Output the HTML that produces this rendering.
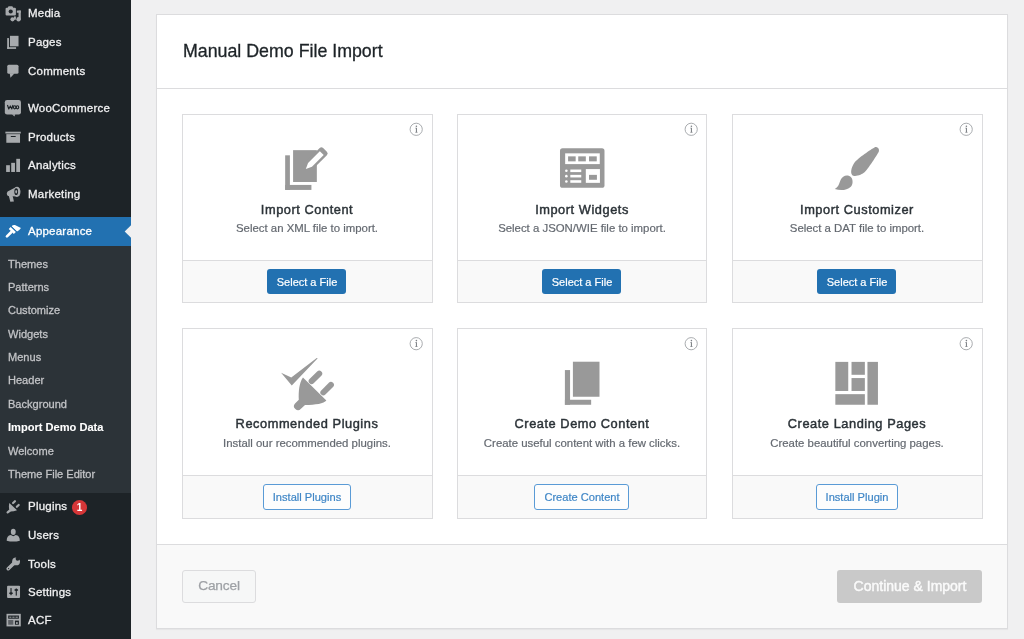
<!DOCTYPE html><html><head><meta charset="utf-8"><style>
html,body{margin:0;padding:0;}
body{width:1024px;height:639px;overflow:hidden;position:relative;background:#f0f0f1;font-family:"Liberation Sans",sans-serif;}
.t{position:absolute;white-space:nowrap;will-change:transform;}
.abs{position:absolute;}
svg{position:absolute;overflow:visible;}
</style></head><body>
<div class="abs" style="left:0;top:0;width:131px;height:639px;background:#1d2327"></div><div class="abs" style="left:0;top:217px;width:131px;height:29px;background:#2271b1"></div><div class="abs" style="left:0;top:246px;width:131px;height:247px;background:#2c3338"></div><svg style="left:0;top:0" width="1024" height="639"><polygon points="131,225.3 124.7,231.5 131,237.7" fill="#f0f0f1"/></svg><div class="t" style="left:28.00px;top:8.47px;font-size:11.5px;line-height:11.5px;color:#f0f0f1;letter-spacing:0.22px;-webkit-text-stroke:0.3px #f0f0f1;">Media</div>
<div class="t" style="left:28.00px;top:36.97px;font-size:11.5px;line-height:11.5px;color:#f0f0f1;letter-spacing:0.22px;-webkit-text-stroke:0.3px #f0f0f1;">Pages</div>
<div class="t" style="left:28.00px;top:65.77px;font-size:11.5px;line-height:11.5px;color:#f0f0f1;letter-spacing:0.22px;-webkit-text-stroke:0.3px #f0f0f1;">Comments</div>
<div class="t" style="left:28.00px;top:103.17px;font-size:11.5px;line-height:11.5px;color:#f0f0f1;letter-spacing:0.22px;-webkit-text-stroke:0.3px #f0f0f1;">WooCommerce</div>
<div class="t" style="left:28.00px;top:131.67px;font-size:11.5px;line-height:11.5px;color:#f0f0f1;letter-spacing:0.22px;-webkit-text-stroke:0.3px #f0f0f1;">Products</div>
<div class="t" style="left:28.00px;top:159.87px;font-size:11.5px;line-height:11.5px;color:#f0f0f1;letter-spacing:0.22px;-webkit-text-stroke:0.3px #f0f0f1;">Analytics</div>
<div class="t" style="left:28.00px;top:188.97px;font-size:11.5px;line-height:11.5px;color:#f0f0f1;letter-spacing:0.22px;-webkit-text-stroke:0.3px #f0f0f1;">Marketing</div>
<div class="t" style="left:28.00px;top:225.87px;font-size:11.5px;line-height:11.5px;color:#fff;letter-spacing:0.22px;-webkit-text-stroke:0.3px #fff;">Appearance</div>
<div class="t" style="left:28.00px;top:501.27px;font-size:11.5px;line-height:11.5px;color:#f0f0f1;letter-spacing:0.22px;-webkit-text-stroke:0.3px #f0f0f1;">Plugins</div>
<div class="t" style="left:28.00px;top:530.07px;font-size:11.5px;line-height:11.5px;color:#f0f0f1;letter-spacing:0.22px;-webkit-text-stroke:0.3px #f0f0f1;">Users</div>
<div class="t" style="left:28.00px;top:558.77px;font-size:11.5px;line-height:11.5px;color:#f0f0f1;letter-spacing:0.22px;-webkit-text-stroke:0.3px #f0f0f1;">Tools</div>
<div class="t" style="left:28.00px;top:586.57px;font-size:11.5px;line-height:11.5px;color:#f0f0f1;letter-spacing:0.22px;-webkit-text-stroke:0.3px #f0f0f1;">Settings</div>
<div class="t" style="left:28.00px;top:614.77px;font-size:11.5px;line-height:11.5px;color:#f0f0f1;letter-spacing:0.22px;-webkit-text-stroke:0.3px #f0f0f1;">ACF</div>
<div class="t" style="left:8.30px;top:258.55px;font-size:11.05px;line-height:11.05px;color:#c3c4c7;-webkit-text-stroke:0.28px #c3c4c7;">Themes</div>
<div class="t" style="left:8.30px;top:281.75px;font-size:11.05px;line-height:11.05px;color:#c3c4c7;-webkit-text-stroke:0.28px #c3c4c7;">Patterns</div>
<div class="t" style="left:8.30px;top:305.05px;font-size:11.05px;line-height:11.05px;color:#c3c4c7;-webkit-text-stroke:0.28px #c3c4c7;">Customize</div>
<div class="t" style="left:8.30px;top:328.75px;font-size:11.05px;line-height:11.05px;color:#c3c4c7;-webkit-text-stroke:0.28px #c3c4c7;">Widgets</div>
<div class="t" style="left:8.30px;top:352.15px;font-size:11.05px;line-height:11.05px;color:#c3c4c7;-webkit-text-stroke:0.28px #c3c4c7;">Menus</div>
<div class="t" style="left:8.30px;top:374.75px;font-size:11.05px;line-height:11.05px;color:#c3c4c7;-webkit-text-stroke:0.28px #c3c4c7;">Header</div>
<div class="t" style="left:8.30px;top:398.95px;font-size:11.05px;line-height:11.05px;color:#c3c4c7;-webkit-text-stroke:0.28px #c3c4c7;">Background</div>
<div class="t" style="left:8.30px;top:421.92px;font-size:11.08px;line-height:11.08px;color:#fff;font-weight:700;-webkit-text-stroke:0.1px #fff;">Import Demo Data</div>
<div class="t" style="left:8.30px;top:445.75px;font-size:11.05px;line-height:11.05px;color:#c3c4c7;-webkit-text-stroke:0.28px #c3c4c7;">Welcome</div>
<div class="t" style="left:8.30px;top:469.35px;font-size:11.05px;line-height:11.05px;color:#c3c4c7;-webkit-text-stroke:0.28px #c3c4c7;">Theme File Editor</div>
<div class="abs" style="left:72px;top:500px;width:15px;height:15px;border-radius:50%;background:#d63638"></div><div class="t" style="left:72.00px;width:15px;text-align:center;top:502.84px;font-size:10px;line-height:10px;color:#fff;font-weight:700;">1</div>
<div class="abs" style="left:156px;top:14px;width:850px;height:613px;border:1px solid #dcdcde;background:#fff;box-shadow:0 1px 1px rgba(0,0,0,.04)"></div><div class="abs" style="left:157px;top:88px;width:850px;height:1px;background:#dcdcde"></div><div class="abs" style="left:157px;top:544px;width:850px;height:83px;background:#f9f9f9;border-top:1px solid #dcdcde"></div><div class="t" style="left:183.00px;top:43.43px;font-size:17.8px;line-height:17.8px;color:#1d2327;-webkit-text-stroke:0.3px #1d2327;">Manual Demo File Import</div>
<div class="abs" style="left:182px;top:114px;width:249px;height:187px;border:1px solid #dcdcde;background:#fff"></div><div class="abs" style="left:183px;top:260px;width:249px;height:41px;border-top:1px solid #dcdcde;background:#f9f9f9"></div><div class="t" style="left:186.70px;width:240px;text-align:center;top:203.96px;font-size:12.8px;line-height:12.8px;color:#2c3338;letter-spacing:0.55px;-webkit-text-stroke:0.45px #2c3338;">Import Content</div>
<div class="t" style="left:186.70px;width:240px;text-align:center;top:223.15px;font-size:11.4px;line-height:11.4px;color:#646970;-webkit-text-stroke:0.2px #646970;">Select an XML file to import.</div>
<svg style="left:0;top:0" width="1" height="1"><circle cx="416.2" cy="129.3" r="6.1" fill="none" stroke="#9a9da1" stroke-width="0.85"/><g fill="#7a7e83"><circle cx="416.4" cy="126.20000000000002" r="0.8"/><rect x="415.9" y="127.80000000000001" width="1.05" height="4.6"/><rect x="415.2" y="131.9" width="2.4" height="0.6"/><rect x="415.2" y="127.80000000000001" width="1.0" height="0.55"/></g></svg><div class="abs" style="left:267px;top:269px;width:79px;height:25px;border-radius:3px;background:#2271b1"></div><div class="t" style="left:256.50px;width:100px;text-align:center;top:276.89px;font-size:11px;line-height:11px;color:#fff;-webkit-text-stroke:0.2px #fff;">Select a File</div>
<div class="abs" style="left:457px;top:114px;width:248px;height:187px;border:1px solid #dcdcde;background:#fff"></div><div class="abs" style="left:458px;top:260px;width:248px;height:41px;border-top:1px solid #dcdcde;background:#f9f9f9"></div><div class="t" style="left:462.00px;width:240px;text-align:center;top:203.96px;font-size:12.8px;line-height:12.8px;color:#2c3338;letter-spacing:0.55px;-webkit-text-stroke:0.45px #2c3338;">Import Widgets</div>
<div class="t" style="left:462.00px;width:240px;text-align:center;top:223.15px;font-size:11.4px;line-height:11.4px;color:#646970;-webkit-text-stroke:0.2px #646970;">Select a JSON/WIE file to import.</div>
<svg style="left:0;top:0" width="1" height="1"><circle cx="691.2" cy="129.3" r="6.1" fill="none" stroke="#9a9da1" stroke-width="0.85"/><g fill="#7a7e83"><circle cx="691.4000000000001" cy="126.20000000000002" r="0.8"/><rect x="690.9000000000001" y="127.80000000000001" width="1.05" height="4.6"/><rect x="690.2" y="131.9" width="2.4" height="0.6"/><rect x="690.2" y="127.80000000000001" width="1.0" height="0.55"/></g></svg><div class="abs" style="left:542.3px;top:269px;width:79px;height:25px;border-radius:3px;background:#2271b1"></div><div class="t" style="left:531.80px;width:100px;text-align:center;top:276.89px;font-size:11px;line-height:11px;color:#fff;-webkit-text-stroke:0.2px #fff;">Select a File</div>
<div class="abs" style="left:732px;top:114px;width:249px;height:187px;border:1px solid #dcdcde;background:#fff"></div><div class="abs" style="left:733px;top:260px;width:249px;height:41px;border-top:1px solid #dcdcde;background:#f9f9f9"></div><div class="t" style="left:736.80px;width:240px;text-align:center;top:203.96px;font-size:12.8px;line-height:12.8px;color:#2c3338;letter-spacing:0.55px;-webkit-text-stroke:0.45px #2c3338;">Import Customizer</div>
<div class="t" style="left:736.80px;width:240px;text-align:center;top:223.15px;font-size:11.4px;line-height:11.4px;color:#646970;-webkit-text-stroke:0.2px #646970;">Select a DAT file to import.</div>
<svg style="left:0;top:0" width="1" height="1"><circle cx="966.2" cy="129.3" r="6.1" fill="none" stroke="#9a9da1" stroke-width="0.85"/><g fill="#7a7e83"><circle cx="966.4000000000001" cy="126.20000000000002" r="0.8"/><rect x="965.9000000000001" y="127.80000000000001" width="1.05" height="4.6"/><rect x="965.2" y="131.9" width="2.4" height="0.6"/><rect x="965.2" y="127.80000000000001" width="1.0" height="0.55"/></g></svg><div class="abs" style="left:817px;top:269px;width:79px;height:25px;border-radius:3px;background:#2271b1"></div><div class="t" style="left:806.50px;width:100px;text-align:center;top:276.89px;font-size:11px;line-height:11px;color:#fff;-webkit-text-stroke:0.2px #fff;">Select a File</div>
<div class="abs" style="left:182px;top:328px;width:249px;height:189px;border:1px solid #dcdcde;background:#fff"></div><div class="abs" style="left:183px;top:475px;width:249px;height:42px;border-top:1px solid #dcdcde;background:#f9f9f9"></div><div class="t" style="left:186.70px;width:240px;text-align:center;top:417.96px;font-size:12.8px;line-height:12.8px;color:#2c3338;letter-spacing:0.55px;-webkit-text-stroke:0.45px #2c3338;">Recommended Plugins</div>
<div class="t" style="left:186.70px;width:240px;text-align:center;top:437.65px;font-size:11.4px;line-height:11.4px;color:#646970;-webkit-text-stroke:0.2px #646970;">Install our recommended plugins.</div>
<svg style="left:0;top:0" width="1" height="1"><circle cx="416.2" cy="343.7" r="6.1" fill="none" stroke="#9a9da1" stroke-width="0.85"/><g fill="#7a7e83"><circle cx="416.4" cy="340.59999999999997" r="0.8"/><rect x="415.9" y="342.2" width="1.05" height="4.6"/><rect x="415.2" y="346.3" width="2.4" height="0.6"/><rect x="415.2" y="342.2" width="1.0" height="0.55"/></g></svg><div class="abs" style="left:263.2px;top:484.2px;width:85.6px;height:23.5px;border-radius:3px;border:1px solid #5a9bd6;background:#fdfdfd"></div><div class="t" style="left:247.00px;width:120px;text-align:center;top:492.20px;font-size:11.1px;line-height:11.1px;color:#3f86c6;-webkit-text-stroke:0.2px #3f86c6;">Install Plugins</div>
<div class="abs" style="left:457px;top:328px;width:248px;height:189px;border:1px solid #dcdcde;background:#fff"></div><div class="abs" style="left:458px;top:475px;width:248px;height:42px;border-top:1px solid #dcdcde;background:#f9f9f9"></div><div class="t" style="left:462.00px;width:240px;text-align:center;top:417.96px;font-size:12.8px;line-height:12.8px;color:#2c3338;letter-spacing:0.55px;-webkit-text-stroke:0.45px #2c3338;">Create Demo Content</div>
<div class="t" style="left:462.00px;width:240px;text-align:center;top:437.65px;font-size:11.4px;line-height:11.4px;color:#646970;-webkit-text-stroke:0.2px #646970;">Create useful content with a few clicks.</div>
<svg style="left:0;top:0" width="1" height="1"><circle cx="691.2" cy="343.7" r="6.1" fill="none" stroke="#9a9da1" stroke-width="0.85"/><g fill="#7a7e83"><circle cx="691.4000000000001" cy="340.59999999999997" r="0.8"/><rect x="690.9000000000001" y="342.2" width="1.05" height="4.6"/><rect x="690.2" y="346.3" width="2.4" height="0.6"/><rect x="690.2" y="342.2" width="1.0" height="0.55"/></g></svg><div class="abs" style="left:534.3px;top:484.2px;width:92.6px;height:23.5px;border-radius:3px;border:1px solid #5a9bd6;background:#fdfdfd"></div><div class="t" style="left:521.60px;width:120px;text-align:center;top:492.20px;font-size:11.1px;line-height:11.1px;color:#3f86c6;-webkit-text-stroke:0.2px #3f86c6;">Create Content</div>
<div class="abs" style="left:732px;top:328px;width:249px;height:189px;border:1px solid #dcdcde;background:#fff"></div><div class="abs" style="left:733px;top:475px;width:249px;height:42px;border-top:1px solid #dcdcde;background:#f9f9f9"></div><div class="t" style="left:736.80px;width:240px;text-align:center;top:417.96px;font-size:12.8px;line-height:12.8px;color:#2c3338;letter-spacing:0.55px;-webkit-text-stroke:0.45px #2c3338;">Create Landing Pages</div>
<div class="t" style="left:736.80px;width:240px;text-align:center;top:437.65px;font-size:11.4px;line-height:11.4px;color:#646970;-webkit-text-stroke:0.2px #646970;">Create beautiful converting pages.</div>
<svg style="left:0;top:0" width="1" height="1"><circle cx="966.2" cy="343.7" r="6.1" fill="none" stroke="#9a9da1" stroke-width="0.85"/><g fill="#7a7e83"><circle cx="966.4000000000001" cy="340.59999999999997" r="0.8"/><rect x="965.9000000000001" y="342.2" width="1.05" height="4.6"/><rect x="965.2" y="346.3" width="2.4" height="0.6"/><rect x="965.2" y="342.2" width="1.0" height="0.55"/></g></svg><div class="abs" style="left:816.4px;top:484.2px;width:79.7px;height:23.5px;border-radius:3px;border:1px solid #5a9bd6;background:#fdfdfd"></div><div class="t" style="left:797.25px;width:120px;text-align:center;top:492.20px;font-size:11.1px;line-height:11.1px;color:#3f86c6;-webkit-text-stroke:0.2px #3f86c6;">Install Plugin</div>
<div class="abs" style="left:182px;top:570px;width:72px;height:31px;border:1px solid #dcdcde;border-radius:3px;background:#f6f7f7"></div><div class="t" style="left:179.00px;width:80px;text-align:center;top:579.30px;font-size:13.7px;line-height:13.7px;color:#9ea1a5;letter-spacing:-0.15px;-webkit-text-stroke:0.25px #9ea1a5;">Cancel</div>
<div class="abs" style="left:837px;top:570px;width:145px;height:33px;border-radius:3px;background:#c9c9c9"></div><div class="t" style="left:834.60px;width:150px;text-align:center;top:579.15px;font-size:14.0px;line-height:14.0px;color:#fafafa;-webkit-text-stroke:0.45px #fafafa;">Continue &amp; Import</div>
<!-- card1 icon: write -->
<svg style="left:280px;top:140px" width="55" height="55" viewBox="0 0 639 639">
<g fill="#999">
<rect x="60" y="178" width="55" height="402"/>
<rect x="60" y="522" width="305" height="58"/>
<rect x="152" y="118" width="276" height="370"/>
</g>
<g transform="translate(300,338) rotate(-45)">
<rect x="40" y="-59" width="275" height="118" rx="28" fill="#999"/>
<polygon points="0,0 69,-32 262,-32 262,32 69,32" fill="#fff"/>
</g>
</svg>
<!-- card2 icon: widgets -->
<svg style="left:555px;top:140px" width="55" height="55" viewBox="0 0 639 639">
<rect x="58" y="95" width="517" height="460" rx="30" fill="#999"/>
<g fill="#fff">
<rect x="118" y="155" width="402" height="125"/>
<rect x="358" y="338" width="164" height="160"/>
<rect x="178" y="343" width="127" height="30"/>
<rect x="178" y="405" width="127" height="30"/>
<rect x="178" y="467" width="127" height="30"/>
<circle cx="132" cy="357" r="15"/>
<circle cx="132" cy="420" r="15"/>
<circle cx="132" cy="482" r="15"/>
</g>
<g fill="#999">
<rect x="152" y="190" width="88" height="58"/>
<rect x="270" y="190" width="88" height="58"/>
<rect x="395" y="190" width="90" height="58"/>
<rect x="395" y="405" width="92" height="57"/>
</g>
</svg>
<!-- card3 icon: brush -->
<svg style="left:830px;top:140px" width="55" height="55" viewBox="0 0 639 639">
<g transform="translate(14,23) scale(30.2,31.0)" fill="#999">
<path d="M18.33 3.57s.27-.8-.31-1.36c-.53-.52-1.22-.24-1.22-.24-.61.3-5.76 3.47-7.67 5.57-.86.96-2.06 3.79-1.09 4.82.92.98 3.960-.17 4.79-1 2.06-2.06 5.21-7.17 5.5-7.790z"/>
<path d="M1.4 17.65c2.37-1.56 1.46-3.41 3.23-4.64.93-.65 2.22-.62 3.08.29.63.67.8 2.57-.16 3.46-1.57 1.45-4 1.55-6.150.890z"/>
</g>
</svg>
<!-- card4 icon: plugin check -->
<svg style="left:275px;top:352px" width="65" height="65" viewBox="0 0 639 639">
<g fill="#999">
<polygon points="60,205 160,250 410,58 420,62 165,330"/>
<path d="M275,250 L505,478 C480,508 400,522 295,522 L255,558 A37,37 0 0 1 197,506 L234,470 C230,390 238,300 275,250 Z"/>
<line x1="360" y1="287" x2="435" y2="212" stroke="#999" stroke-width="58" stroke-linecap="round"/>
<line x1="475" y1="398" x2="550" y2="323" stroke="#999" stroke-width="58" stroke-linecap="round"/>
</g>
</svg>
<!-- card5 icon: copy -->
<svg style="left:555px;top:355px" width="55" height="55" viewBox="0 0 639 639">
<g fill="#999">
<rect x="115" y="175" width="60" height="403"/>
<rect x="115" y="520" width="305" height="58"/>
<rect x="208" y="78" width="309" height="407"/>
</g>
</svg>
<!-- card6 icon: layout -->
<svg style="left:830px;top:355px" width="55" height="55" viewBox="0 0 639 639">
<g fill="#999">
<rect x="62" y="80" width="150" height="338"/>
<rect x="250" y="80" width="155" height="150"/>
<rect x="250" y="268" width="155" height="150"/>
<rect x="62" y="455" width="343" height="123"/>
<rect x="435" y="80" width="122" height="498"/>
</g>
</svg>
<svg style="left:2px;top:2px" width="24" height="24" viewBox="0 0 639 639"><g fill="#a7aaad">
<path d="M95,180 Q95,150 125,150 L150,150 L175,110 L275,110 L300,150 L340,150 Q370,150 370,180 L370,330 Q370,360 340,360 L125,360 Q95,360 95,330 Z"/>
<rect x="440" y="228" width="60" height="240"/><rect x="395" y="228" width="105" height="58"/>
<circle cx="440" cy="460" r="58"/>
<rect x="318" y="385" width="52" height="85"/><circle cx="280" cy="462" r="55"/>
</g><circle cx="232" cy="252" r="55" fill="#1d2327"/></svg>
<svg style="left:2px;top:30px" width="24" height="24" viewBox="0 0 639 639"><g fill="#a7aaad">
<rect x="212" y="155" width="228" height="280"/>
<rect x="138" y="215" width="48" height="288"/><rect x="138" y="458" width="237" height="45"/>
</g></svg>
<svg style="left:2px;top:59px" width="24" height="24" viewBox="0 0 639 639"><g fill="#a7aaad">
<rect x="140" y="150" width="300" height="240" rx="40"/>
<polygon points="205,380 335,380 225,500"/>
</g></svg>
<svg style="left:2px;top:96px" width="24" height="24" viewBox="0 0 639 639"><g fill="#a7aaad">
<rect x="75" y="105" width="430" height="390" rx="60"/>
<polygon points="265,485 355,485 330,548"/>
</g><g fill="none" stroke="#1d2327" stroke-width="30" stroke-linejoin="round"><polyline points="145,240 180,345 222,265 262,345 292,240"/><ellipse cx="338" cy="300" rx="33" ry="42"/><ellipse cx="412" cy="300" rx="33" ry="42"/></g></svg>
<svg style="left:2px;top:124px" width="24" height="24" viewBox="0 0 639 639"><g fill="#a7aaad">
<rect x="90" y="205" width="410" height="48"/>
<rect x="115" y="270" width="365" height="230"/>
</g><rect x="230" y="318" width="140" height="27" rx="13" fill="#1d2327"/></svg>
<svg style="left:2px;top:153px" width="24" height="24" viewBox="0 0 639 639"><g fill="#a7aaad">
<rect x="110" y="325" width="100" height="180"/><rect x="245" y="262" width="100" height="243"/><rect x="380" y="155" width="100" height="350"/>
</g></svg>
<svg style="left:2px;top:181px" width="24" height="24" viewBox="0 0 639 639"><g fill="#a7aaad">
<path d="M150,280 L365,165 L400,410 L160,400 Q100,345 150,280 Z"/>
<ellipse cx="400" cy="288" rx="92" ry="135"/>
<polygon points="180,390 282,390 318,545 222,555"/>
</g><ellipse cx="378" cy="283" rx="50" ry="92" fill="#1d2327"/><ellipse cx="378" cy="286" rx="25" ry="46" fill="#a7aaad"/></svg>
<svg style="left:2px;top:219px" width="24" height="24" viewBox="0 0 639 639"><g fill="#fff">
<line x1="132" y1="462" x2="250" y2="345" stroke="#fff" stroke-width="72" stroke-linecap="round"/>
<polygon points="180,265 230,215 370,345 315,400"/>
<path d="M255,195 Q290,150 345,160 L505,238 Q470,295 400,335 Z"/>
</g><line x1="240" y1="190" x2="390" y2="335" stroke="#2271b1" stroke-width="22"/></svg>
<svg style="left:2px;top:495px" width="24" height="24" viewBox="0 0 639 639"><g fill="#a7aaad">
<path d="M195,210 L400,405 Q300,445 205,440 Q170,320 195,210 Z"/>
<line x1="205" y1="420" x2="150" y2="462" stroke="#a7aaad" stroke-width="62" stroke-linecap="round"/>
<line x1="295" y1="215" x2="345" y2="165" stroke="#a7aaad" stroke-width="58" stroke-linecap="round"/>
<line x1="395" y1="315" x2="445" y2="265" stroke="#a7aaad" stroke-width="58" stroke-linecap="round"/>
</g></svg>
<svg style="left:2px;top:523px" width="24" height="24" viewBox="0 0 639 639"><g fill="#a7aaad">
<ellipse cx="300" cy="235" rx="65" ry="85"/>
<path d="M125,470 C125,380 160,330 235,320 L300,352 L365,320 C440,330 475,380 475,470 Q300,515 125,470 Z"/>
</g></svg>
<svg style="left:2px;top:552px" width="24" height="24" viewBox="0 0 639 639"><g fill="#a7aaad">
<line x1="165" y1="445" x2="330" y2="285" stroke="#a7aaad" stroke-width="95" stroke-linecap="round"/>
<circle cx="375" cy="250" r="105"/>
</g><circle cx="415" cy="180" r="52" fill="#1d2327"/><rect x="380" y="95" width="120" height="70" fill="#1d2327" transform="rotate(45 415 180)"/><circle cx="175" cy="440" r="16" fill="#1d2327"/></svg>
<svg style="left:2px;top:580px" width="24" height="24" viewBox="0 0 639 639">
<rect x="135" y="150" width="345" height="330" rx="25" fill="#a7aaad"/>
<g fill="#1d2327"><rect x="225" y="215" width="30" height="190"/><ellipse cx="240" cy="355" rx="52" ry="26"/>
<rect x="365" y="225" width="30" height="190"/><ellipse cx="380" cy="265" rx="52" ry="26"/></g></svg>
<svg style="left:2px;top:608px" width="24" height="24" viewBox="0 0 639 639">
<rect x="120" y="155" width="380" height="335" fill="#a7aaad"/>
<g fill="#1d2327"><rect x="165" y="200" width="285" height="85"/><rect x="345" y="335" width="105" height="110"/></g>
<g fill="#5d6166"><rect x="165" y="320" width="135" height="125"/></g>
<g fill="#a7aaad"><rect x="195" y="232" width="55" height="25"/><rect x="275" y="232" width="60" height="25"/><rect x="360" y="232" width="62" height="25"/><rect x="372" y="378" width="48" height="45"/></g></svg>
</body></html>
